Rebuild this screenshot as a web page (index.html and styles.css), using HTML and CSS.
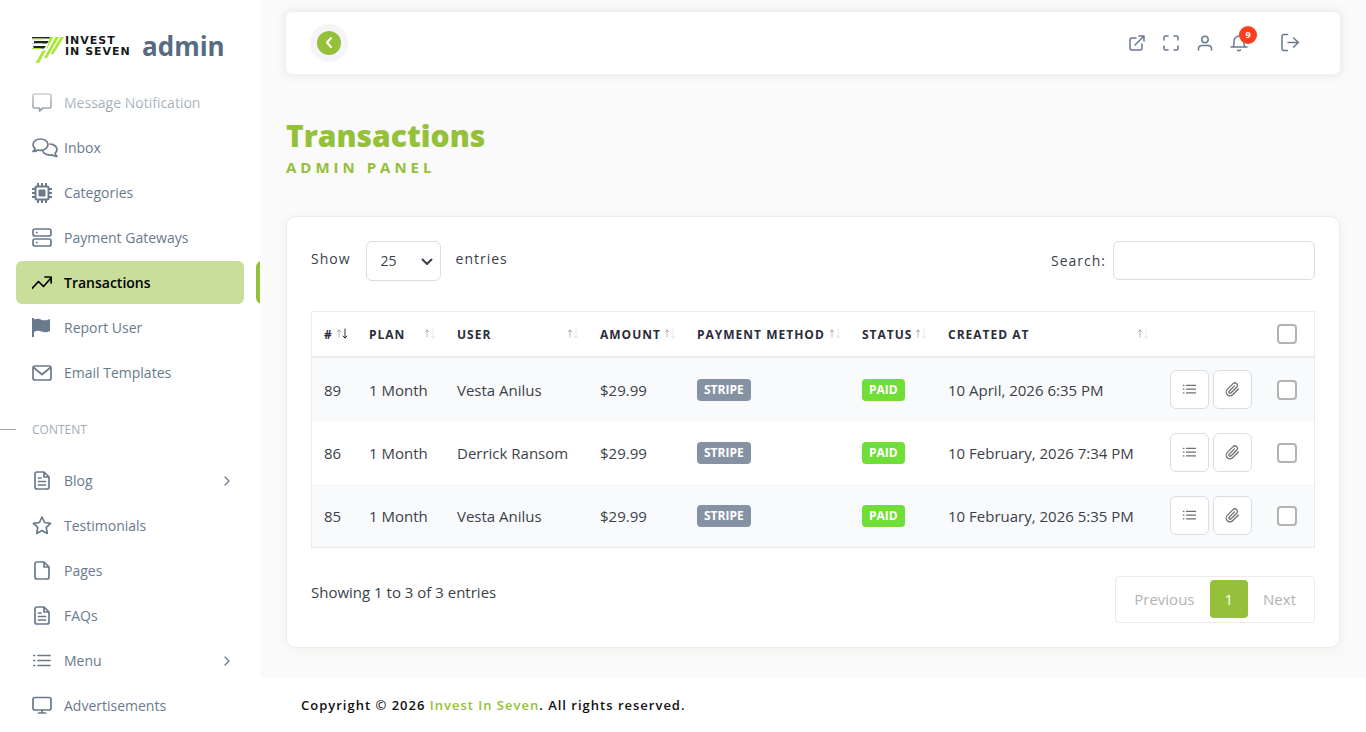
FILE: index.html
```
<!DOCTYPE html>
<html lang="en">
<head>
  <meta charset="UTF-8" />
  <meta name="viewport" content="width=device-width, initial-scale=1.0"/>
  <title>Transactions - Invest In Seven admin</title>
  <link rel="stylesheet" href="styles.css">
</head>
<body>

  <!-- icons -->
  <svg class="sprite" aria-hidden="true">
    <symbol id="i-message" viewBox="0 0 20 20"><path d="M2.500 1h15a1.500 1.500 0 0 1 1.500 1.500v11a1.500 1.500 0 0 1-1.500 1.500h-6.500L7.500 18v-3h-5A1.500 1.500 0 0 1 1 13.500V2.500A1.500 1.500 0 0 1 2.500 1z"/></symbol>
    <symbol id="i-chats" viewBox="0 0 26 20"><path d="M8.500 1C4.400 1 1 3.500 1 6.600c0 1.500.8 2.900 2 3.900-.2 1.300-1 2.200-2 2.900 1.800.2 3.500-.4 4.600-1.400.9.300 1.900.4 2.900.4 4.100 0 7.500-2.600 7.500-5.800S12.600 1 8.500 1zM18 6c4 .2 7 2.600 7 5.400 0 1.500-.7 2.700-1.900 3.700.2 1.400.9 2.400 1.900 3.200-1.800.1-3.600-.5-4.700-1.500-4 .9-8-.5-9.300-3.200"/></symbol>
    <symbol id="i-chip" viewBox="0 0 20 20"><rect x="3.500" y="3.500" width="13" height="13" rx="1"/><rect x="7.500" y="7.500" width="5" height="5" fill="currentColor"/><path d="M6 0v3M10 0v3M14 0v3M6 17v3M10 17v3M14 17v3M0 6h3M0 10h3M0 14h3M17 6h3M17 10h3M17 14h3"/></symbol>
    <symbol id="i-server" viewBox="0 0 20 20"><rect x="1" y="1" width="18" height="7" rx="2"/><rect x="1" y="11" width="18" height="7" rx="2"/><path d="M4.500 4.500h.5M4.500 14.500h.5"/></symbol>
    <symbol id="i-trend" viewBox="0 0 20 20"><path d="M0 15.500l6.500-7 5 5L19 5M13 4h6.200v6"/></symbol>
    <symbol id="i-flag" viewBox="0 0 20 20"><path fill="currentColor" stroke="none" d="M0 0h2v1.600c3-1.500 5-.8 7.500.1 2.500.9 5 .8 8.500-.7v12c-3 1.700-5.600 1.500-8.200.6-2.500-.9-4.900-1.200-7.800.5V19H0z"/></symbol>
    <symbol id="i-mail" viewBox="0 0 20 20"><rect x="1" y="3" width="18" height="14" rx="2"/><path d="M1.500 4.500l8.500 7 8.500-7"/></symbol>
    <symbol id="i-file" viewBox="0 0 20 20"><path d="M12 1H5a2 2 0 0 0-2 2v13a2 2 0 0 0 2 2h10a2 2 0 0 0 2-2V6zM12 1v5h5"/></symbol>
    <symbol id="i-filetext" viewBox="0 0 20 20"><path d="M12 1H5a2 2 0 0 0-2 2v13a2 2 0 0 0 2 2h10a2 2 0 0 0 2-2V6zM12 1v5h5M6.500 7h2.500M6.500 10.500h7M6.500 14h7"/></symbol>
    <symbol id="i-star" viewBox="0 0 20 20"><path d="M10 1l2.600 5.500 6 .8-4.400 4.100 1.100 6L10 14.500l-5.300 2.900 1.100-6L1.400 7.300l6-.8z"/></symbol>
    <symbol id="i-list" viewBox="0 0 20 20"><path d="M6 4.500h12M6 9.500h12M6 14.500h12M1.800 4.500h.8M1.800 9.500h.8M1.800 14.500h.8"/></symbol>
    <symbol id="i-monitor" viewBox="0 0 20 20"><rect x="1" y="1.500" width="18" height="12.500" rx="2"/><path d="M10 14v3M6.500 17h7"/></symbol>
    <symbol id="i-right" viewBox="0 0 10 10"><path d="M3 1l4 4-4 4"/></symbol>
    <symbol id="i-clip" viewBox="0 0 24 24"><path d="M21.400 11.100l-9.200 9.200a6 6 0 0 1-8.500-8.500l9.200-9.200a4 4 0 0 1 5.700 5.700l-9.200 9.200a2 2 0 0 1-2.800-2.800l8.500-8.500"/></symbol>
    <symbol id="i-sort" viewBox="0 0 12 14"><path class="up" d="M3 10V3M1 5l2-2 2 2"/><path class="down" d="M9 2v9M7 9l2 2 2-2"/></symbol>
  </svg>

  <div class="layout">
    <aside class="sidebar">
      <a class="logo" href="#">
        <svg class="logo-mark" viewBox="0 0 32 27" aria-hidden="true">
          <path fill="#20251d" d="M0 1h20l-1 1.500H0zM2 5h15l-2 2.500H2zM1 10h13l-2 2.500H2z"/>
          <path fill="#a7e83b" d="M0 2.500h12v1H0zM0 7h10v1H0zM0 12h9v1H0zM18 1h3.500L7 27H3.500l7-12.500H14zM23.500 1H27L15 22h-3zM28.500 1H32L21.500 18h-3z"/>
        </svg>
        <span class="logo-name">INVEST<br>IN SEVEN</span>
        <span class="logo-admin">admin</span>
      </a>
      <nav class="menu">
        <a href="#"><svg><use href="#i-message"/></svg>Message Notification</a>
        <a href="#"><svg class="wide"><use href="#i-chats"/></svg>Inbox</a>
        <a href="#"><svg class="chip"><use href="#i-chip"/></svg>Categories</a>
        <a href="#"><svg><use href="#i-server"/></svg>Payment Gateways</a>
        <a href="#" class="active"><svg><use href="#i-trend"/></svg>Transactions</a>
        <a href="#"><svg><use href="#i-flag"/></svg>Report User</a>
        <a href="#"><svg><use href="#i-mail"/></svg>Email Templates</a>
        <h2>CONTENT</h2>
        <a href="#"><svg><use href="#i-filetext"/></svg>Blog<svg class="arrow"><use href="#i-right"/></svg></a>
        <a href="#"><svg><use href="#i-star"/></svg>Testimonials</a>
        <a href="#"><svg><use href="#i-file"/></svg>Pages</a>
        <a href="#"><svg><use href="#i-filetext"/></svg>FAQs</a>
        <a href="#"><svg><use href="#i-list"/></svg>Menu<svg class="arrow"><use href="#i-right"/></svg></a>
        <a href="#"><svg><use href="#i-monitor"/></svg>Advertisements</a>
      </nav>
    </aside>

    <div class="page">
      <header class="navbar">
        <button class="back" aria-label="Collapse menu">
          <span><svg viewBox="0 0 24 24"><path d="M14 7l-4 4.500 4 4.500"/></svg></span>
        </button>
        <div class="nav-icons">
          <a href="#" aria-label="Open site"><svg viewBox="0 0 18 18"><path d="M8 4H3.500A1.500 1.500 0 0 0 2 5.500v9A1.500 1.500 0 0 0 3.500 16h9a1.500 1.500 0 0 0 1.500-1.500V10M7 11l9-9M11 2h5v5"/></svg></a>
          <a href="#" aria-label="Full screen"><svg viewBox="0 0 18 18"><path d="M2 6V3.500A1.500 1.500 0 0 1 3.500 2H6M12 2h2.500A1.500 1.500 0 0 1 16 3.500V6M16 12v2.500a1.500 1.500 0 0 1-1.500 1.500H12M6 16H3.500A1.500 1.500 0 0 1 2 14.500V12"/></svg></a>
          <a href="#" aria-label="Profile"><svg viewBox="0 0 18 18"><circle cx="9" cy="5.500" r="3.200"/><path d="M2.500 16v-1.500A3 3 0 0 1 5.500 11.500h7a3 3 0 0 1 3 3V16"/></svg></a>
          <a href="#" class="bell" aria-label="Notifications"><svg viewBox="0 0 18 18"><path d="M1 13h16M3 13c1.500-2 1-4 1-6a5 5 0 0 1 10 0c0 2-.5 4 1 6M7.500 16c1 1 2 1 3 0"/></svg><span class="count">9</span></a>
          <a href="#" class="logout" aria-label="Log out"><svg viewBox="0 0 20 20"><path d="M7.500 1.500H4a2 2 0 0 0-2 2v12a2 2 0 0 0 2 2h3.500M8 9.500h10.500M13.500 5l5 4.500-5 4.500"/></svg></a>
        </div>
      </header>

      <main>
        <div class="heading">
          <h1>Transactions</h1>
          <p>ADMIN PANEL</p>
        </div>

        <section class="card">
          <div class="tools">
            <label class="length">Show
              <span class="select">
                <select><option>10</option><option selected>25</option><option>50</option></select>
                <svg viewBox="0 0 12 12"><path d="M1.500 4.500L6 9l4.500-4.500"/></svg>
              </span>
              entries
            </label>
            <label class="search">Search: <input type="search"></label>
          </div>

          <table>
            <colgroup>
              <col class="c-id"><col class="c-plan"><col class="c-user"><col class="c-amount"><col class="c-method"><col class="c-status"><col class="c-date"><col class="c-actions"><col class="c-check">
            </colgroup>
            <thead>
              <tr>
                <th><div class="sorted"># <svg><use href="#i-sort"/></svg></div></th>
                <th><div>PLAN <svg><use href="#i-sort"/></svg></div></th>
                <th><div>USER <svg><use href="#i-sort"/></svg></div></th>
                <th><div>AMOUNT <svg><use href="#i-sort"/></svg></div></th>
                <th><div>PAYMENT METHOD <svg><use href="#i-sort"/></svg></div></th>
                <th><div>STATUS <svg><use href="#i-sort"/></svg></div></th>
                <th><div>CREATED AT <svg><use href="#i-sort"/></svg></div></th>
                <th></th>
                <th><input type="checkbox" aria-label="Select all"></th>
              </tr>
            </thead>
            <tbody>
              <tr>
                <td>89</td><td>1 Month</td><td>Vesta Anilus</td><td>$29.99</td>
                <td><span class="badge">STRIPE</span></td>
                <td><span class="badge paid">PAID</span></td>
                <td>10 April, 2026 6:35 PM</td>
                <td><div class="actions"><button aria-label="Details"><svg><use href="#i-list"/></svg></button><button class="clip" aria-label="Attachment"><svg><use href="#i-clip"/></svg></button></div></td>
                <td><input type="checkbox" aria-label="Select 89"></td>
              </tr>
              <tr>
                <td>86</td><td>1 Month</td><td>Derrick Ransom</td><td>$29.99</td>
                <td><span class="badge">STRIPE</span></td>
                <td><span class="badge paid">PAID</span></td>
                <td>10 February, 2026 7:34 PM</td>
                <td><div class="actions"><button aria-label="Details"><svg><use href="#i-list"/></svg></button><button class="clip" aria-label="Attachment"><svg><use href="#i-clip"/></svg></button></div></td>
                <td><input type="checkbox" aria-label="Select 86"></td>
              </tr>
              <tr>
                <td>85</td><td>1 Month</td><td>Vesta Anilus</td><td>$29.99</td>
                <td><span class="badge">STRIPE</span></td>
                <td><span class="badge paid">PAID</span></td>
                <td>10 February, 2026 5:35 PM</td>
                <td><div class="actions"><button aria-label="Details"><svg><use href="#i-list"/></svg></button><button class="clip" aria-label="Attachment"><svg><use href="#i-clip"/></svg></button></div></td>
                <td><input type="checkbox" aria-label="Select 85"></td>
              </tr>
            </tbody>
          </table>

          <div class="bottom">
            <p>Showing 1 to 3 of 3 entries</p>
            <div class="pager">
              <a href="#">Previous</a>
              <a href="#" class="current">1</a>
              <a href="#">Next</a>
            </div>
          </div>
        </section>
      </main>

      <footer>Copyright © 2026 <a href="#">Invest In Seven</a>. All rights reserved.</footer>
    </div>
  </div>

</body>
</html>
```

FILE: styles.css
```
* {
  box-sizing: border-box;
}

body {
  margin: 0;
  font-family: "Segoe UI", "Open Sans", "Noto Sans", sans-serif;
  font-size: 14px;
  color: #3b3f4a;
  background-color: #fafafa;
}

svg {
  fill: none;
  stroke: currentColor;
  stroke-width: 1.5;
  stroke-linecap: round;
  stroke-linejoin: round;
}

a {
  text-decoration: none;
  color: inherit;
}

button, input, select {
  font: inherit;
  color: inherit;
}

.sprite {
  display: none;
}

.layout {
  display: flex;
  height: 100vh;
}

/* sidebar */
.sidebar {
  width: 260px;
  flex-shrink: 0;
  background-color: #fff;
  overflow: hidden;
  position: relative;
}

.logo {
  display: flex;
  align-items: center;
  height: 81px;
  padding: 10px 0 0 32px;
}

.logo-mark {
  width: 32px;
  height: 27px;
  stroke: none;
  margin-top: 8px;
}

.logo-name {
  font: bold 11px/11px "DejaVu Sans", sans-serif;
  letter-spacing: 1px;
  color: #16191a;
  width: 78px;
  padding-left: 1px;
}

.logo-admin {
  font-size: 26px;
  font-weight: bold;
  color: #566b82;
}

.sidebar::after {
  content: "";
  position: absolute;
  top: 81px;
  left: 0;
  width: 100%;
  height: 34px;
  background: linear-gradient(rgba(255,255,255,0.9), rgba(255,255,255,0.2));
}

.menu a {
  display: flex;
  align-items: center;
  height: 43px;
  margin: 0 16px 2px;
  padding: 0 12px 0 16px;
  border-radius: 6px;
  color: #697a8d;
}

.menu svg {
  width: 20px;
  height: 20px;
  margin-right: 12px;
  stroke-width: 1.7;
}

.menu .wide {
  width: 26px;
  margin-right: 6px;
}

.menu .chip {
  stroke-width: 2;
}

.menu .arrow {
  width: 10px;
  height: 10px;
  margin-left: auto;
  margin-right: 0;
  stroke-width: 1.2;
}

.menu .active {
  background-color: #cade9b;
  color: #000;
  font-weight: 600;
  box-shadow: 240px 0 0 #95c03a;
}

.menu h2 {
  display: flex;
  align-items: center;
  margin: 0;
  height: 63px;
  padding-top: 4px;
  font-size: 12px;
  font-weight: normal;
  color: #a1acb8;
}

.menu h2::before {
  content: "";
  width: 16px;
  height: 1px;
  margin-right: 16px;
  background-color: #a1acb8;
}

/* top bar */
.page {
  flex: 1;
  display: flex;
  flex-direction: column;
  min-width: 0;
}

.navbar {
  display: flex;
  align-items: center;
  justify-content: space-between;
  height: 62px;
  margin: 12px 26px 0;
  padding: 0 40px 0 24px;
  background-color: #fff;
  border-radius: 6px;
  box-shadow: 0 0 8px 2px rgba(67,89,113,0.1);
}

.back {
  width: 38px;
  height: 38px;
  padding: 7px;
  border: none;
  border-radius: 50%;
  background-color: #f5f5f9;
}

.back span {
  display: block;
  height: 24px;
  border-radius: 50%;
  background-color: #95c03a;
  color: #fff;
}

.back svg {
  width: 24px;
  height: 24px;
  stroke-width: 2;
}

.nav-icons {
  display: flex;
  align-items: center;
  gap: 16px;
  color: #697a8d;
}

.nav-icons a {
  display: flex;
  position: relative;
}

.nav-icons svg {
  width: 18px;
  height: 18px;
}

.nav-icons .logout {
  margin-left: 16px;
}

.nav-icons .logout svg {
  width: 20px;
  height: 20px;
}

.count {
  position: absolute;
  top: -8px;
  right: -9px;
  width: 18px;
  border-radius: 50%;
  background-color: #ff3e1d;
  color: #fff;
  font-size: 9px;
  line-height: 18px;
  font-weight: bold;
  text-align: center;
}

/* content */
main {
  flex: 1;
  padding: 44px 26px 30px;
}

.heading {
  color: #95c03a;
  margin-bottom: 39px;
}

h1 {
  margin: 0;
  font-size: 30px;
  line-height: 36px;
  font-weight: 800;
}

.heading p {
  margin: 3px 0 0;
  font-size: 15px;
  line-height: 20px;
  font-weight: bold;
  letter-spacing: 4px;
}

.card {
  padding: 24px;
  background-color: #fff;
  border: 1px solid #ededed;
  border-radius: 10px;
  box-shadow: 0 2px 12px rgba(100,100,50,0.06);
}

.tools {
  display: flex;
  justify-content: space-between;
  align-items: flex-start;
  margin-bottom: 30px;
}

.length, .search {
  letter-spacing: 1px;
}

.length {
  display: flex;
  gap: 15px;
  line-height: 36px;
}

.select {
  position: relative;
  display: flex;
}

.select svg {
  position: absolute;
  top: 14px;
  right: 8px;
  width: 12px;
  height: 12px;
  stroke-width: 2;
  pointer-events: none;
}

select {
  appearance: none;
  width: 75px;
  height: 40px;
  padding: 0 14px;
  background-color: #fff;
  border: 1px solid #d9dee3;
  border-radius: 6px;
}

.search {
  display: flex;
  align-items: center;
  height: 39px;
  gap: 7px;
}

.search input {
  width: 202px;
  height: 39px;
  padding: 0 12px;
  border: 1px solid #d9dee3;
  border-radius: 6px;
  background-color: #fff;
}

/* table */
table {
  width: 100%;
  table-layout: fixed;
  border-collapse: separate;
  border-spacing: 0;
  border: 1px solid #ebebeb;
}

.c-id { width: 45px; }
.c-plan { width: 88px; }
.c-user { width: 143px; }
.c-amount { width: 97px; }
.c-method { width: 165px; }
.c-status { width: 86px; }
.c-actions { width: 107px; }
.c-check { width: 49px; }

th, td {
  padding: 0 12px;
  text-align: left;
  white-space: nowrap;
}

th {
  height: 46px;
  padding-right: 9px;
  border-bottom: 2px solid #ebebeb;
  font-size: 12px;
  letter-spacing: 1px;
  color: #2b2c3b;
}

th div {
  display: flex;
  align-items: center;
  justify-content: space-between;
}

th svg {
  width: 12px;
  height: 14px;
  flex-shrink: 0;
  stroke-width: 1;
  --down: 0.1;
}

.sorted svg {
  --down: 1;
}

.up {
  opacity: 0.35;
}

.down {
  opacity: var(--down);
}

td {
  height: 63px;
  font-size: 15px;
}

tbody tr:nth-child(odd) {
  background-color: #f9fafc;
}

.badge {
  display: inline-block;
  padding: 0 7px;
  border-radius: 4px;
  background-color: #8592a3;
  color: #fff;
  font-size: 12px;
  line-height: 22px;
  font-weight: bold;
  vertical-align: middle;
}

.paid {
  background-color: #71dd37;
}

.actions {
  display: flex;
  gap: 4px;
}

.actions button {
  display: flex;
  align-items: center;
  justify-content: center;
  width: 39px;
  height: 39px;
  padding: 0;
  background-color: #fff;
  border: 1px solid #d9dee3;
  border-radius: 6px;
  color: #6f6f6f;
}

.actions svg {
  width: 15px;
  height: 15px;
}

.actions .clip svg {
  stroke-width: 2;
}

input[type="checkbox"] {
  appearance: none;
  display: block;
  width: 20px;
  height: 20px;
  margin: 0;
  border: 2px solid #b3b3b3;
  border-radius: 4px;
  background-color: #fff;
}

.bottom {
  display: flex;
  justify-content: space-between;
  margin-top: 28px;
  font-size: 15px;
}

.bottom p {
  margin: 6px 0 0;
  line-height: 20px;
}

.pager {
  display: flex;
  padding: 3px 3px 4px;
  border: 1px solid #ebebeb;
  border-radius: 4px;
  color: #b3b3b3;
  line-height: 38px;
}

.pager a {
  padding: 0 15px;
}

.pager .current {
  border-radius: 4px;
  background-color: #95c03a;
  color: #fff;
}

footer {
  padding: 17px 41px;
  background-color: #fff;
  color: #111;
  font-size: 13px;
  line-height: 20px;
  font-weight: 600;
  letter-spacing: 1px;
}

footer a {
  color: #95c03a;
}
```
